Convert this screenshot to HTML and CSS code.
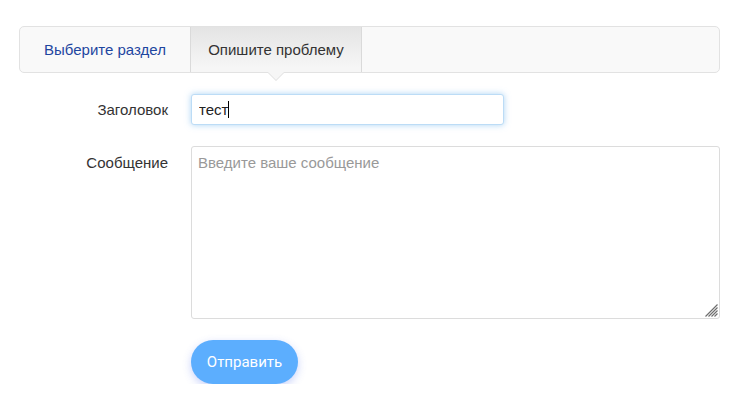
FILE: index.html
```html
<!DOCTYPE html>
<html lang="ru">
<head>
<meta charset="utf-8">
<link rel="stylesheet" href="styles.css">
</head>
<body>
<div class="page">
  <nav class="tabs">
    <a class="tab" href="#">Выберите раздел</a>
    <span class="tab active">Опишите проблему</span>
  </nav>
  <form class="form">
    <div class="row">
      <label class="label" for="title">Заголовок</label>
      <span class="field-wrap">
        <input id="title" class="input" type="text" value="тест">
        <span class="caret"></span>
      </span>
    </div>
    <div class="row">
      <label class="label label-top" for="msg">Сообщение</label>
      <span class="field-wrap">
        <textarea id="msg" class="textarea" placeholder="Введите ваше сообщение"></textarea>
        <svg class="grip" width="13" height="13" viewBox="0 0 13 13" aria-hidden="true">
          <path d="M12.5 0.5 L0.5 12.5 M12.5 3.5 L3.5 12.5 M12.5 6.5 L6.5 12.5 M12.5 9.5 L9.5 12.5" stroke="#6e6e6e" stroke-width="1.2" fill="none"/>
        </svg>
      </span>
    </div>
    <div class="row">
      <span class="label"></span>
      <button type="button" class="btn">Отправить</button>
    </div>
  </form>
</div>
</body>
</html>
```
FILE: styles.css
```css
html, body {
  margin: 0;
  padding: 0;
  background: #fff;
}
body {
  font-family: "Liberation Sans", Arial, sans-serif;
  font-size: 15px;
  color: #333;
}
.page {
  padding: 26px 11px 0 19px;
}
.tabs {
  display: flex;
  height: 45px;
  border: 1px solid #e2e2e2;
  border-radius: 5px;
  background: #f9f9f9;
}
.tab {
  display: flex;
  align-items: center;
  justify-content: center;
  width: 170px;
  font-size: 15px;
  text-decoration: none;
  color: #1e46a0;
  position: relative;
}
.tab.active {
  width: 170px;
  color: #333;
  background: linear-gradient(#e4e4e4, #f6f6f6 90%);
  border-left: 1px solid #dadada;
  border-right: 1px solid #dadada;
}
.tab.active::after,
.tab.active::before {
  content: "";
  position: absolute;
  left: 50%;
  margin-left: -8px;
  border: 8px solid transparent;
  border-bottom: 0;
}
.tab.active::before {
  top: 46px;
  border-top-color: #dedede;
}
.tab.active::after {
  top: 45px;
  border-top-color: #f6f6f6;
}
.form {
  padding-top: 21px;
  display: flex;
  flex-direction: column;
  gap: 21px;
}
.row {
  display: flex;
  align-items: center;
}
.label {
  width: 149px;
  flex: none;
  text-align: right;
  margin-right: 23px;
  color: #333;
}
.label-top {
  align-self: flex-start;
  padding-top: 8px;
}
.field-wrap {
  position: relative;
  display: block;
}
.input {
  display: block;
  box-sizing: border-box;
  width: 313px;
  height: 31px;
  margin: 0;
  padding: 0 7px;
  border: 1px solid #bcdcf6;
  border-radius: 3px;
  font: 15px "Liberation Sans", Arial, sans-serif;
  color: #222;
  box-shadow: 0 0 6px rgba(102, 175, 233, 0.55);
  outline: none;
}
.caret {
  position: absolute;
  left: 37px;
  top: 7px;
  width: 1px;
  height: 17px;
  background: #000;
}
.textarea {
  display: block;
  box-sizing: border-box;
  width: 529px;
  height: 173px;
  margin: 0;
  padding: 7px 6px;
  border: 1px solid #dcdcdc;
  border-radius: 3px;
  font: 15px "Liberation Sans", Arial, sans-serif;
  color: #333;
  resize: none;
  outline: none;
}
.textarea::placeholder {
  color: #999;
}
.grip {
  position: absolute;
  right: 2px;
  bottom: 2px;
}
.btn {
  width: 107px;
  height: 44px;
  border: 0;
  border-radius: 22px;
  background: #5caefe;
  color: #fff;
  font: 15px Roboto, "Liberation Sans", sans-serif;
  box-shadow: 0 3px 8px rgba(80, 110, 240, 0.3);
  cursor: pointer;
  padding: 0;
}
```
